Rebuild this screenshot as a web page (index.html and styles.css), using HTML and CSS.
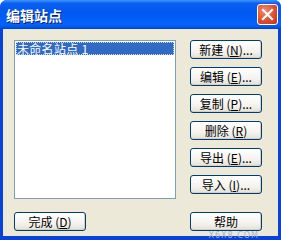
FILE: index.html
```html
<!DOCTYPE html>
<html lang="zh-CN">
<head>
  <meta charset="UTF-8" />
  <title>编辑站点</title>
  <link rel="stylesheet" href="styles.css">
</head>
<body>
  <div class="window">
    <div class="titlebar">
      <span class="title">编辑站点</span>
      <span class="close">
        <svg width="13" height="13" viewBox="0 0 13 13"><path d="M2 2 L11 11 M11 2 L2 11" stroke="#fff" stroke-width="2.2" stroke-linecap="square"/></svg>
      </span>
    </div>
    <div class="frame">
      <div class="content">
        <div class="listbox">
          <div class="item selected">未命名站点 1</div>
        </div>
        <div class="side">
          <button class="btn">新建 (<u>N</u>)...</button>
          <button class="btn">编辑 (<u>E</u>)...</button>
          <button class="btn">复制 (<u>P</u>)...</button>
          <button class="btn">删除 (<u>R</u>)</button>
          <button class="btn">导出 (<u>E</u>)...</button>
          <button class="btn">导入 (<u>I</u>)...</button>
        </div>
        <button class="btn">完成 (<u>D</u>)</button>
        <button class="btn">帮助</button>
      </div>
    </div>
    <span class="mark">X6X8.COM</span>
  </div>
</body>
</html>
```

FILE: styles.css
```css
body {
  margin: 0;
  font-family: "Noto Sans CJK SC", "DejaVu Sans", sans-serif;
  background: #fff;
}
.window {
  position: relative;
  width: 281px;
  height: 240px;
  display: flex;
  flex-direction: column;
  background: #0842d8;
  border-radius: 7px 7px 0 0;
  overflow: hidden;
}
.titlebar {
  height: 29px;
  display: flex;
  align-items: center;
  justify-content: space-between;
  padding: 0 3px 0 6px;
  background: linear-gradient(#3d95ff, #0a5ff0 12%, #0058ee 45%, #0463fb 85%, #0053e4 95%, #003dd0);
}
.title {
  color: #fff;
  font-size: 14px;
  font-weight: bold;
  text-shadow: 1px 1px 0 #0a1e70;
}
.close {
  width: 19px;
  height: 19px;
  display: flex;
  align-items: center;
  justify-content: center;
  border: 1px solid #fff;
  border-radius: 3px;
  background: radial-gradient(circle at 35% 30%, #f08a6e, #dc4a28 60%, #c4361a);
}
.frame {
  flex: 1;
  padding: 0 3px 4px;
  background: #0842d8;
}
.content {
  height: 100%;
  box-sizing: border-box;
  background: #ece9d8;
  padding: 11px 0 0 11px;
  display: grid;
  grid-template-columns: 162px 72px;
  grid-template-rows: 159px 19px;
  column-gap: 14px;
  row-gap: 13px;
}
.listbox {
  background: #fff;
  border: 1px solid #7f9db9;
  padding: 1px;
}
.item {
  font-size: 12px;
  line-height: 13px;
  height: 13px;
  padding: 0 1px;
  letter-spacing: 0.3px;
}
.selected {
  background: #316ac5;
  color: #fff;
  outline: 1px dotted #c8d8f0;
  outline-offset: -1px;
}
.side {
  display: flex;
  flex-direction: column;
  gap: 8px;
}
.btn {
  width: 72px;
  height: 19px;
  padding: 0;
  font-family: "Noto Sans CJK SC", "DejaVu Sans", sans-serif;
  font-size: 12px;
  line-height: 17px;
  color: #000;
  border: 1px solid #003c74;
  border-radius: 3px;
  background: linear-gradient(#fff, #f4f3ee 60%, #e3e1d6);
  box-shadow: inset -1px -1px 0 #d6d0c4;
}
.mark {
  position: absolute;
  right: 22px;
  bottom: 0;
  font-family: "DejaVu Sans", sans-serif;
  font-size: 8px;
  line-height: 9px;
  color: #a8b4d0;
  letter-spacing: 1px;
}
```
